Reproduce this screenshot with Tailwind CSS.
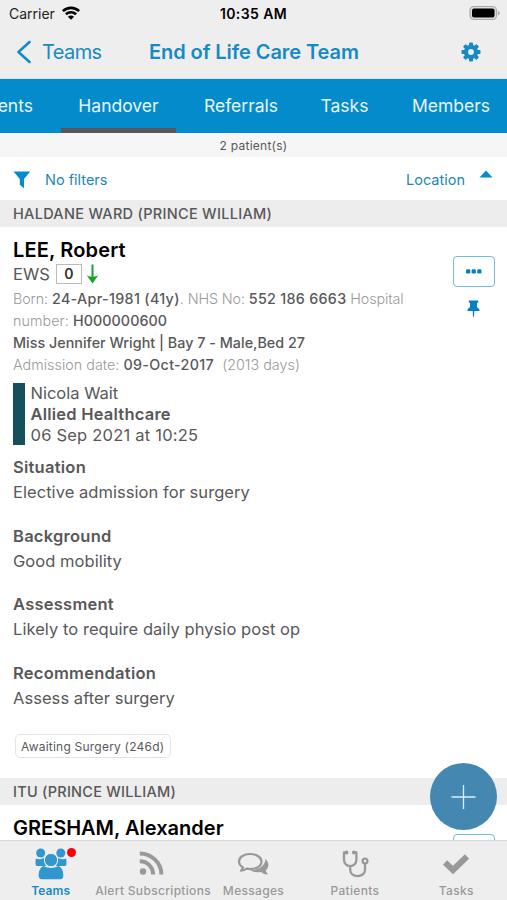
<!DOCTYPE html>
<html lang="en">
<head>
<meta charset="utf-8">
<title>End of Life Care Team</title>
<script src="https://cdn.jsdelivr.net/npm/@tailwindcss/browser@4"></script>
</head>
<body class="bg-white font-['Inter','Liberation_Sans',sans-serif]">
<div class="relative flex h-[900px] w-[507px] flex-col overflow-hidden bg-white text-[#58585a]">

  <!-- Status bar -->
  <div class="grid h-[28px] shrink-0 grid-cols-3 items-center bg-[#eeeeee] pr-[7px] pl-[9px] text-[14px] leading-[28px] text-[#222]">
    <div class="flex items-center gap-[7px]"><span>Carrier</span>
      <svg class="-mt-[2px] h-[14px] w-[18px]" viewBox="0 0 18 14" fill="none" stroke="#000" stroke-width="2.6"><path d="M.9 5.2C5.4.7 12.600.7 17.100 5.200M3.900 8.300c2.900-2.800 7.300-2.800 10.200 0"/><path d="M9 13.800 5.900 10.700c1.700-1.600 4.500-1.600 6.200 0z" fill="#000" stroke="none"/></svg>
    </div>
    <div class="-ml-[2px] text-center font-semibold tracking-[0.4px] whitespace-nowrap text-black">10:35 AM</div>
    <svg class="-mt-[2px] h-[16px] w-[31px] justify-self-end" viewBox="0 0 31 16"><rect x="1" y="1.500" width="26.500" height="13" rx="4" fill="#ddd" stroke="#aaa" stroke-width="1.200"/><rect x="3" y="3.500" width="22.500" height="9" rx="2" fill="#000"/><path d="M29 6v4.500q1.700-.6 1.700-2.250T29 6z" fill="#aaa"/></svg>
  </div>

  <!-- Navigation bar -->
  <div class="flex h-[51px] shrink-0 items-center border-b border-[#d5dfe5] bg-[#eeeeee] pr-[26px] pb-[2px] pl-[16px] text-[20px] leading-[48px] text-[#168ac5]">
    <div class="flex w-[133px] items-center gap-[11px]">
      <svg class="h-[24px] w-[15px]" viewBox="0 0 15 24" fill="none" stroke="currentColor" stroke-width="2.600" stroke-linecap="round" stroke-linejoin="round"><path d="M13.500 2 2.500 12l11 10"/></svg>
      <span class="tracking-[-0.6px]">Teams</span>
    </div>
    <h1 class="grow text-[20px] font-semibold tracking-[-0.07px] whitespace-nowrap">End of Life Care Team</h1>
    <svg class="h-[20px] w-[20px]" viewBox="-10 -10 20 20"><g fill="#168ac5"><g id="teeth"><rect x="-2" y="-9.500" width="4" height="19" rx=".8"/><rect x="-9.500" y="-2" width="19" height="4" rx=".8"/></g><use href="#teeth" transform="rotate(45)"/><circle r="7.200"/></g><circle r="2.900" fill="#eee"/></svg>
  </div>

  <!-- Section tabs -->
  <div class="flex h-[54px] shrink-0 bg-[#048bcb] text-[17.500px] leading-[54px] whitespace-nowrap text-[#e8f5fc]">
    <div class="flex w-[61px] shrink-0 justify-end overflow-hidden pr-[28px]">Documents</div>
    <div class="w-[115px] shrink-0 border-b-[5px] border-[#55575a] text-center">Handover</div>
    <div class="w-[130px] shrink-0 text-center">Referrals</div>
    <div class="w-[77px] shrink-0 text-center">Tasks</div>
    <div class="grow pr-[17px] text-right">Members</div>
  </div>

  <div class="h-[24px] shrink-0 bg-[#f6f6f6] text-center text-[12px] leading-[25px] tracking-[0.25px]">2 patient(s)</div>

  <!-- Filter row -->
  <div class="flex h-[43px] shrink-0 items-center pr-[14px] pl-[13px] text-[14.500px] leading-[45px] text-[#1c87b8]">
    <svg class="mt-[3px] h-[18px] w-[18px]" viewBox="0 0 18 18" fill="#048bcb"><path d="M.5.5h16.800L11 8v9.300l-4.200-3.600V8z"/></svg>
    <span class="mt-px ml-[14px] grow">No filters</span>
    <span class="mt-px">Location</span>
    <svg class="-mt-[9px] ml-[14px] h-[8px] w-[14px]" viewBox="0 0 14 8" fill="#048bcb"><path d="M7 .5 13.500 7.500H.5z"/></svg>
  </div>

  <h2 class="h-[27px] shrink-0 bg-[#ededed] pl-[13px] text-[14.500px] leading-[28px] font-medium tracking-[0.29px]">HALDANE WARD (PRINCE WILLIAM)</h2>

  <!-- Patient record -->
  <article class="flex h-[551px] shrink-0 justify-between pl-[13px]">
    <div class="pt-[11px]">
      <h3 class="h-[24px] text-[20px] leading-[24px] font-semibold tracking-[0.15px] text-black">LEE, Robert</h3>
      <div class="flex h-[24px] items-center text-[16.500px] leading-[24px]">
        <span>EWS</span>
        <span class="ml-[6px] flex h-[20px] w-[26px] items-center justify-center border border-[#bbb] text-[14px] font-semibold text-[#333]">0</span>
        <svg class="ml-[4px] h-[20px] w-[13px]" viewBox="0 0 13 20" fill="#18a428"><path d="M5.500.5h2v12.200c1.700 0 3.500-.7 5-1.700L6.500 19.500.5 11c1.500 1 3.300 1.700 5 1.700z"/></svg>
      </div>
      <div class="h-[90px] pt-[2px] text-[14.300px] leading-[22px] font-light whitespace-nowrap text-[#999]">
        <p class="tracking-[-0.09px]">Born: <b class="font-medium tracking-[0.33px] text-[#58585a]">24-Apr-1981 (41y)</b>. NHS No: <b class="font-medium tracking-[0.3px] text-[#58585a]">552 186 6663</b> Hospital</p>
        <p class="tracking-[0.08px]">number: <b class="font-medium tracking-[0.05px] text-[#58585a]">H000000600</b></p>
        <p class="font-medium tracking-[0.03px] text-[#58585a]">Miss Jennifer Wright | Bay 7 - Male,Bed 27</p>
        <p class="tracking-[0.03px]">Admission date: <b class="font-medium tracking-[0.33px] text-[#58585a]">09-Oct-2017</b>&nbsp; (2013 days)</p>
      </div>
      <div class="mt-[7px] h-[62px] border-l-[12px] border-[#16505e] pl-[5.500px] text-[16.500px] leading-[21px]">
        <p>Nicola Wait</p>
        <p class="font-semibold tracking-[0.22px]">Allied Healthcare</p>
        <p class="tracking-[0.22px]">06 Sep 2021 at 10:25</p>
      </div>
      <dl class="mt-[10px] text-[16.500px] leading-[25px]">
        <div class="h-[68.500px]"><dt class="font-semibold tracking-[0.25px]">Situation</dt><dd class="tracking-[0.05px]">Elective admission for surgery</dd></div>
        <div class="h-[68.500px]"><dt class="font-semibold tracking-[0.25px]">Background</dt><dd class="tracking-[0.05px]">Good mobility</dd></div>
        <div class="h-[68.500px]"><dt class="font-semibold tracking-[0.25px]">Assessment</dt><dd class="tracking-[0.05px]">Likely to require daily physio post op</dd></div>
        <div class="h-[68.500px]"><dt class="font-semibold tracking-[0.25px]">Recommendation</dt><dd class="tracking-[0.05px]">Assess after surgery</dd></div>
      </dl>
      <div class="mt-[5px] ml-[2px] h-[24px] w-[156px] rounded-[5px] border border-[#e3e3e3] pl-[5px] text-[12px] leading-[24px] tracking-[0.22px] whitespace-nowrap">Awaiting Surgery (246d)</div>
    </div>
    <div class="flex w-[54px] shrink-0 flex-col items-end pt-[29px] pr-[12px]">
      <button class="flex h-[31px] w-[42px] items-center justify-center rounded-[4px] border border-[#70bde0]" aria-label="More">
        <svg class="h-[5px] w-[16px]" viewBox="0 0 16 5" fill="#0480c0"><rect y=".3" width="4.300" height="4.300" rx="1.300"/><rect x="5.600" y=".3" width="4.300" height="4.300" rx="1.300"/><rect x="11.200" y=".3" width="4.300" height="4.300" rx="1.300"/></svg>
      </button>
      <svg class="mt-[13px] mr-[15px] h-[17px] w-[13px]" viewBox="0 0 13 17" fill="#0480c0"><path d="M1.800.5h9.400v2.200H10v4.600c1.700.8 2.600 2 2.600 3.600H7.300L7 16.800H6l-.3-5.900H.4c0-1.600.9-2.800 2.600-3.600V2.700H1.800z"/></svg>
    </div>
  </article>

  <h2 class="h-[27px] shrink-0 bg-[#ededed] pl-[13px] text-[14.500px] leading-[28px] font-medium tracking-[0.25px]">ITU (PRINCE WILLIAM)</h2>
  <article class="flex h-[35px] shrink-0 justify-between overflow-hidden pr-[12px] pl-[13px]">
    <h3 class="pt-[11px] text-[20px] leading-[24px] font-semibold text-black">GRESHAM, Alexander</h3>
    <div class="mt-[29px] h-[31px] w-[42px] shrink-0 rounded-[4px] border border-[#70bde0]"></div>
  </article>

  <!-- Bottom tab bar -->
  <nav class="grid h-[60px] shrink-0 grid-cols-5 border-t border-[#d8d8d8] bg-[#eeeeee] text-[12px] leading-[16px] font-medium tracking-[0.32px] whitespace-nowrap text-[#999]">
    <div class="relative flex flex-col items-center pt-[7px] text-[#168ac5]">
      <svg class="h-[32px] w-[32px]" viewBox="0 0 32 32" fill="#3198cf"><circle cx="5.700" cy="5" r="4.500"/><circle cx="25.800" cy="5" r="4.500"/><path d="M.8 10.500q4.500 1.500 8.500-.5-.5 5 2 8H2.200Q.3 18 .5 15zM31.200 10.500q-4.500 1.500-8.500-.5.500 5-2 8h9.100q1.900 0 1.700-3z"/><circle cx="16" cy="12" r="6.600" stroke="#eee"/><path d="M8.500 18q7.500 4 15 0c3.500 1.500 5 5.500 4.800 10 0 2-1 3.200-3 3.200H6.700c-2 0-3-1.200-3-3.200-.2-4.500 1.300-8.500 4.800-10z"/></svg>
      <div class="absolute top-[7px] left-[67px] h-[9px] w-[9px] rounded-full bg-[#fb0007]"></div>
      <span class="mt-[3px] font-semibold tracking-[0.1px]">Teams</span>
    </div>
    <div class="flex flex-col items-center pt-[7px]">
      <svg class="h-[32px] w-[26px]" viewBox="0 0 26 32" fill="none" stroke="#999" stroke-width="4"><circle cx="4" cy="23.500" r="3.200" fill="#999" stroke="none"/><path d="M.8 13.300c7.500 0 13.300 5.700 13.300 13.300M.8 5.500c12 0 21.600 9.400 21.600 21.100"/></svg>
      <span class="mt-[3px] ml-[2px]">Alert Subscriptions</span>
    </div>
    <div class="flex flex-col items-center pt-[7px]">
      <svg class="h-[32px] w-[32px]" viewBox="0 0 32 32"><path d="M28.500 11c4.300 4 3.300 9 .1 11.500l2.400 4q-4 .2-7-2.600c-4 .8-8 .2-10.500-1.700C22 22 28 18 28.500 11z" fill="#999"/><path d="M13 6C6.500 6 2 9.500 2 13.600c0 2.400 1.500 4.500 4 5.900l-1.900 3.200q3.200-.3 5.600-2c9 1.500 14.800-2.300 14.800-7.100C24.500 9.500 19.500 6 13 6z" fill="#eee" stroke="#999" stroke-width="2.200" stroke-linejoin="round"/></svg>
      <span class="mt-[3px]">Messages</span>
    </div>
    <div class="flex flex-col items-center pt-[7px]">
      <svg class="h-[32px] w-[28px]" viewBox="0 0 28 32" fill="none" stroke="#999" stroke-width="2.300" stroke-linecap="round" stroke-linejoin="round"><path d="M6 4.500H3v7.600c0 3.500 2.800 6 6.200 6s6.200-2.500 6.200-6V4.500h-3M9.200 18.100v3.700c0 8.300 14.800 8.300 14.800 0v-6"/><circle cx="24" cy="13" r="2.400"/><circle cx="5.500" cy="4.500" r=".8"/><circle cx="12.900" cy="4.500" r=".8"/></svg>
      <span class="mt-[3px]">Patients</span>
    </div>
    <div class="flex flex-col items-center pt-[7px]">
      <svg class="h-[32px] w-[28px]" viewBox="0 0 28 32" fill="none" stroke="#999" stroke-width="6"><path d="m3 14.500 8 7.500L25 8.500" stroke-linejoin="miter"/></svg>
      <span class="mt-[3px]">Tasks</span>
    </div>
  </nav>

  <!-- Floating add button -->
  <button class="absolute top-[763px] left-[430px] flex h-[67px] w-[67px] items-center justify-center rounded-full bg-[#4488b1]" aria-label="Add">
    <svg class="h-[25px] w-[25px]" viewBox="0 0 25 25" stroke="#d8f0fb" stroke-width="1.300"><path d="M.5 13h24M12.500 1v24"/></svg>
  </button>
</div>
</body>
</html>
